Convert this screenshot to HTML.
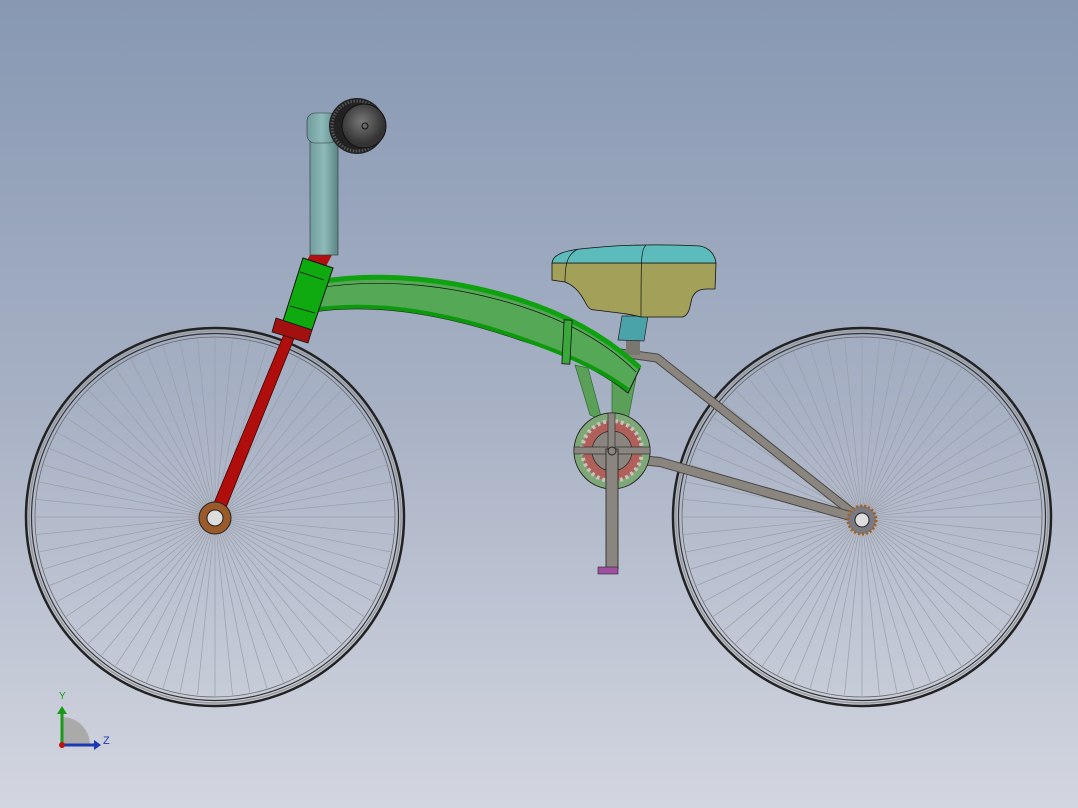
<!DOCTYPE html>
<html><head><style>
html,body{margin:0;padding:0;}
body{width:1078px;height:808px;overflow:hidden;background:linear-gradient(#8798b3 0%,#a7b1c4 50%,#d3d6e0 100%);font-family:"Liberation Sans",sans-serif;}
svg{position:absolute;left:0;top:0;}
</style></head><body>
<svg width="1078" height="808" viewBox="0 0 1078 808">
<defs>
<linearGradient id="stem" x1="0" x2="1"><stop offset="0" stop-color="#6f9c9c"/><stop offset=".5" stop-color="#8fbaba"/><stop offset="1" stop-color="#5a8585"/></linearGradient>
<radialGradient id="knob" cx=".45" cy=".4"><stop offset="0" stop-color="#777"/><stop offset="1" stop-color="#333"/></radialGradient>
</defs>
<g id="w1"></g>
<g id="w2"></g>
<path d="M598,350 L657,358 L858,517" fill="none" stroke="#4a4844" stroke-width="9" stroke-linejoin="round"/>
<path d="M598,350 L657,358 L858,517" fill="none" stroke="#8a857e" stroke-width="7" stroke-linejoin="round"/>
<rect x="626" y="335" width="14" height="20" fill="#7a7670"/>
<path d="M622,316 L648,316 L644,341 L618,340 Z" fill="#4aa3a8" stroke="#222" stroke-width=".7"/>
<path d="M575,365 L590,415 L602,420 L588,368 Z" fill="#5aa058" stroke="#2f6a2f" stroke-width=".7"/>
<path d="M612,378 L612,420 L628,420 L636,378 Z" fill="#5aa058" stroke="#2f6a2f" stroke-width=".7"/>
<path d="M318,282 C380,272 450,278 520,300 C570,316 610,340 640,368 L628,393 C600,370 560,352 520,340 C450,316 380,302 312,312 Z" fill="#55a855" stroke="#111" stroke-width="1"/>
<path d="M318,282 C380,272 450,278 520,300 C570,316 610,340 640,368" fill="none" stroke="#0fa10f" stroke-width="5"/>
<path d="M312,310 C380,300 450,314 520,338 C560,352 600,368 628,390" fill="none" stroke="#0c9a0c" stroke-width="4"/>
<path d="M318,288 C380,278 450,284 520,306 C570,322 608,344 636,372" fill="none" stroke="#111" stroke-width=".7"/>
<rect x="563" y="320" width="8" height="44" fill="#3aa83a" stroke="#111" stroke-width=".8" transform="rotate(3 567 342)"/>
<path d="M285,332 L295,336 L221,520 L209,515 Z" fill="#b00d0d" stroke="#400" stroke-width=".8"/>
<path d="M310,255 L332,255 L324,270 L305,264 Z" fill="#b01010"/>
<path d="M303,258 L333,268 L312,330 L283,321 Z" fill="#0faa0f" stroke="#111" stroke-width="1"/>
<line x1="300" y1="272" x2="324" y2="280" stroke="#111" stroke-width=".8"/>
<line x1="290" y1="306" x2="315" y2="313" stroke="#111" stroke-width=".8"/>
<path d="M276,318 L312,330 L308,343 L272,332 Z" fill="#a31010" stroke="#111" stroke-width=".8"/>
<rect x="310" y="140" width="28" height="115" fill="url(#stem)" stroke="#333" stroke-width=".6"/>
<rect x="307" y="113" width="30" height="30" rx="8" fill="url(#stem)" stroke="#333" stroke-width=".6"/>
<circle cx="357" cy="126" r="28" fill="#222"/>
<circle cx="357" cy="126" r="25" fill="none" stroke="#555" stroke-width="3" stroke-dasharray="1.5 1.5"/>
<circle cx="364" cy="126" r="22" fill="url(#knob)" stroke="#111"/>
<circle cx="365" cy="126" r="3" fill="none" stroke="#111"/>
<!-- seat -->
<path d="M552,263 L552,280 L565,282 C575,286 580,293 584,300 C588,308 590,310 595,310 C620,313 630,314 641,317 L683,317 C690,314 690,305 692,298 C695,291 700,289 707,289 L715,289 L716,263 Z" fill="#a3a05a" stroke="#111" stroke-width=".8"/>
<path d="M552,263 C553,254 565,250 590,248 C620,245 660,244 700,246 C710,248 715,255 716,263 Z" fill="#5cbcbc" stroke="#111" stroke-width=".8"/>
<path d="M578,249 C568,254 565,262 565,282" fill="none" stroke="#111" stroke-width=".7"/>
<path d="M646,245 C641,250 641,258 641,317" fill="none" stroke="#111" stroke-width=".7"/>
<path d="M620,458 L660,462 L857,518" fill="none" stroke="#4a4844" stroke-width="10" stroke-linejoin="round"/>
<path d="M620,458 L660,462 L857,518" fill="none" stroke="#8a857e" stroke-width="8" stroke-linejoin="round"/>
<circle cx="612" cy="451" r="38" fill="#7fa878" stroke="#222" stroke-width="1"/>
<circle cx="612" cy="451" r="30" fill="#b0605a" stroke="#c8c4bc" stroke-width="4" stroke-dasharray="3 3"/>
<circle cx="612" cy="451" r="20" fill="#8a857e" stroke="#222" stroke-width=".7"/>
<rect x="574" y="447" width="76" height="7" fill="#8a857e" stroke="#222" stroke-width=".6"/>
<rect x="608" y="413" width="7" height="38" fill="#8a857e" stroke="#222" stroke-width=".6"/>
<rect x="606" y="449" width="12" height="120" fill="#8a857e" stroke="#222" stroke-width=".8"/>
<circle cx="612" cy="451" r="4" fill="#8a857e" stroke="#222"/>
<rect x="598" y="567" width="20" height="7" fill="#a050a0" stroke="#222" stroke-width=".6"/>
<circle cx="862" cy="520" r="14" fill="#7a7a85" stroke="#a06020" stroke-width="3" stroke-dasharray="2 2"/>
<circle cx="862" cy="520" r="7" fill="#ddd" stroke="#222"/>
<circle cx="215" cy="518" r="16" fill="#9a5a2a" stroke="#222"/>
<circle cx="215" cy="518" r="8" fill="#ddd" stroke="#222"/>
<path d="M62,717 A28,28 0 0 1 90,745 L62,745 Z" fill="#aaa"/>
<line x1="62" y1="745" x2="62" y2="712" stroke="#1a9a1a" stroke-width="3"/>
<polygon points="57,714 67,714 62,706" fill="#1a9a1a"/>
<line x1="62" y1="745" x2="94" y2="745" stroke="#1a3ab0" stroke-width="3"/>
<polygon points="94,740 94,750 101,745" fill="#1a3ab0"/>
<circle cx="62" cy="745" r="3" fill="#c01010"/>
<text x="59" y="699" font-size="10" fill="#1a9a1a">Y</text>
<text x="103" y="744" font-size="11" fill="#1a3ab0">Z</text>
</svg>
<script>
function wheel(id,cx,cy){
 var g=document.getElementById(id),s='';
 for(var i=0;i<64;i++){var a=i*Math.PI*2/64;
  s+='<line x1="'+cx+'" y1="'+cy+'" x2="'+(cx+179*Math.cos(a)).toFixed(1)+'" y2="'+(cy+179*Math.sin(a)).toFixed(1)+'" stroke="#9a9ea8" stroke-width=".7"/>';}
 s+='<circle cx="'+cx+'" cy="'+cy+'" r="189" fill="none" stroke="#222" stroke-width="2.5"/>';
 s+='<circle cx="'+cx+'" cy="'+cy+'" r="186" fill="none" stroke="#999" stroke-width="1.5"/>';
 s+='<circle cx="'+cx+'" cy="'+cy+'" r="183.5" fill="none" stroke="#333" stroke-width="1.2"/>';
 s+='<circle cx="'+cx+'" cy="'+cy+'" r="180" fill="none" stroke="#666" stroke-width=".8"/>';
 g.innerHTML=s;
}
wheel('w1',215,517);wheel('w2',862,517);
</script>
</body></html>
